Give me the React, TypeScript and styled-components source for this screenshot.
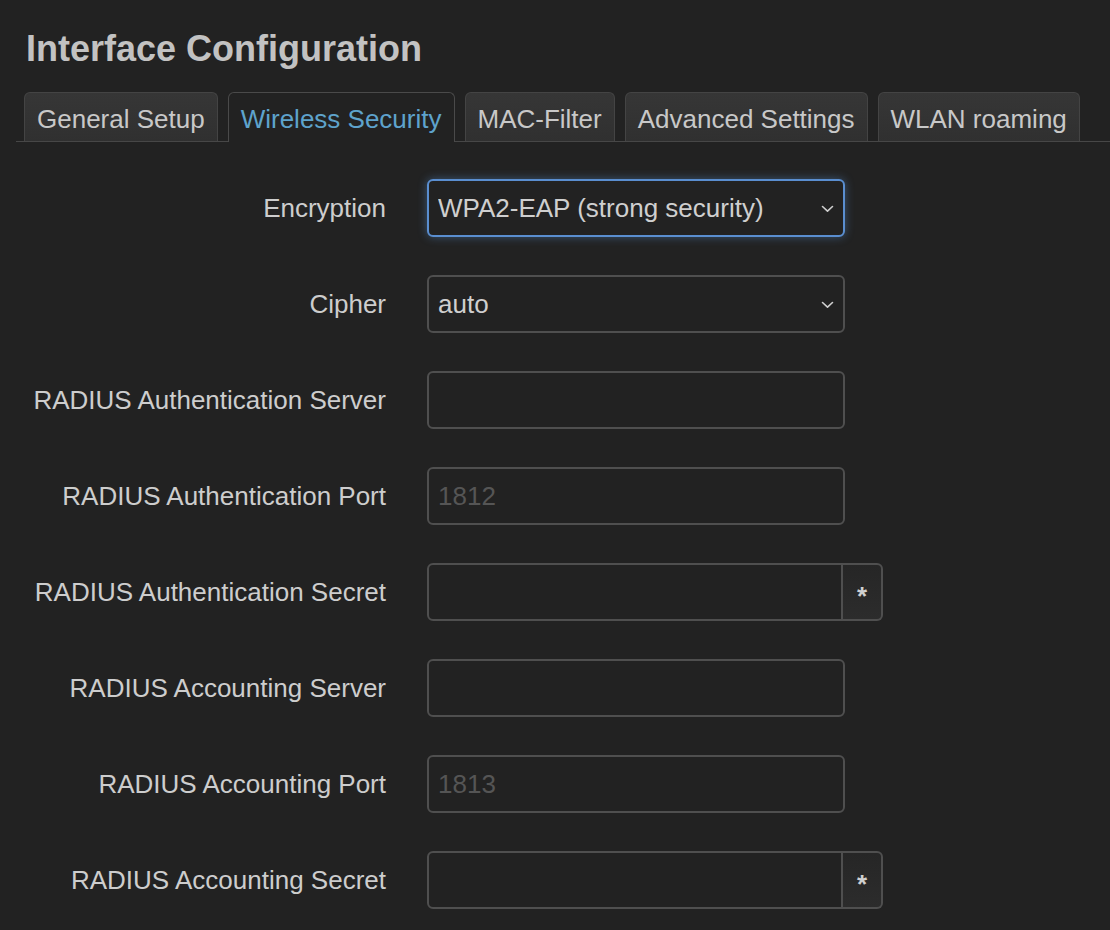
import React from "react";
import styled, { createGlobalStyle, css } from "styled-components";

const Global = createGlobalStyle`
  html, body { margin: 0; padding: 0; background: #222222; }
  body { font-family: "Liberation Sans", Arial, Helvetica, sans-serif; color: #cccccc; }
  * { box-sizing: border-box; }
`;

const Page = styled.div`
  padding: 27px 0 0 16px;
  min-height: 930px;
  background: #222222;
`;

const Title = styled.h2`
  margin: 0;
  padding-left: 10px;
  font-size: 36px;
  line-height: 44px;
  font-weight: bold;
  color: #c2c2c2;
`;

const TabBar = styled.ul`
  display: flex;
  gap: 10px;
  list-style: none;
  margin: 21px 0 0 0;
  padding: 0 0 0 8px;
  border-bottom: 1px solid #474747;
`;

const Tab = styled.li<{ $active?: boolean }>`
  font-size: 26px;
  line-height: 36px;
  padding: 8px 12px 4px;
  border: 1px solid #444;
  border-bottom: none;
  border-radius: 6px 6px 0 0;
  white-space: nowrap;
  color: #c8c8c8;
  background: linear-gradient(#363636, #303030);
  ${(p) =>
    p.$active &&
    css`
      color: #5ea3cc;
      background: #222222;
      margin-bottom: -1px;
      padding-bottom: 5px;
      border-color: #4a4a4a;
    `}
`;

const Form = styled.div`
  display: flex;
  flex-direction: column;
  gap: 38px;
  padding-top: 37px;
`;

const Row = styled.div`
  display: grid;
  grid-template-columns: 370px auto;
  column-gap: 41px;
  align-items: center;
`;

const Label = styled.label`
  text-align: right;
  font-size: 26px;
  color: #cdcdcd;
  white-space: nowrap;
`;

const fieldBase = css`
  height: 58px;
  font-family: "Liberation Sans", Arial, Helvetica, sans-serif;
  font-size: 26px;
  color: #cfcfcf;
  background: #222222;
  border: 2px solid #4f4f4f;
  border-radius: 6px;
  padding: 0 9px;
  outline: none;
  &::placeholder { color: #555555; }
`;

const TextInput = styled.input`
  ${fieldBase}
  width: 418px;
`;

const SelectWrap = styled.div`
  position: relative;
  width: 418px;
`;

const Select = styled.select<{ $focus?: boolean }>`
  ${fieldBase}
  width: 100%;
  appearance: none;
  -webkit-appearance: none;
  ${(p) =>
    p.$focus &&
    css`
      border-color: #5a8ed0;
      box-shadow: 0 0 10px rgba(90, 150, 220, 0.45);
    `}
`;

const Chevron = styled.svg`
  position: absolute;
  right: 11px;
  top: 50%;
  width: 13px;
  height: 8px;
  margin-top: -3px;
  pointer-events: none;
`;

const Group = styled.div`
  display: flex;
  width: 456px;
  height: 58px;
`;

const GroupInput = styled.input`
  ${fieldBase}
  flex: 1;
  min-width: 0;
  border-radius: 6px 0 0 6px;
`;

const RevealButton = styled.button`
  width: 40px;
  height: 58px;
  border: 2px solid #4f4f4f;
  border-left: none;
  border-radius: 0 6px 6px 0;
  background: linear-gradient(#262626, #2c2c2c);
  color: #d0d0d0;
  font-family: "Liberation Sans", Arial, sans-serif;
  font-weight: bold;
  font-size: 26px;
  padding: 8px 0 0;
  cursor: pointer;
`;

const tabs = ["General Setup", "Wireless Security", "MAC-Filter", "Advanced Settings", "WLAN roaming"];

function SelectField({ value, focus }: { value: string; focus?: boolean }) {
  return (
    <SelectWrap>
      <Select $focus={focus} defaultValue={value}>
        <option>{value}</option>
      </Select>
      <Chevron viewBox="0 0 13 8">
        <path d="M1.5 1.5 L6.5 6.2 L11.5 1.5" fill="none" stroke="#cfcfcf" strokeWidth="1.6" strokeLinecap="round" strokeLinejoin="round" />
      </Chevron>
    </SelectWrap>
  );
}

function SecretField() {
  return (
    <Group>
      <GroupInput type="password" />
      <RevealButton>*</RevealButton>
    </Group>
  );
}

export default function App() {
  return (
    <>
      <Global />
      <Page>
        <Title>Interface Configuration</Title>
        <TabBar>
          {tabs.map((t) => (
            <Tab key={t} $active={t === "Wireless Security"}>
              {t}
            </Tab>
          ))}
        </TabBar>
        <Form>
          <Row>
            <Label>Encryption</Label>
            <SelectField value="WPA2-EAP (strong security)" focus />
          </Row>
          <Row>
            <Label>Cipher</Label>
            <SelectField value="auto" />
          </Row>
          <Row>
            <Label>RADIUS Authentication Server</Label>
            <TextInput />
          </Row>
          <Row>
            <Label>RADIUS Authentication Port</Label>
            <TextInput placeholder="1812" />
          </Row>
          <Row>
            <Label>RADIUS Authentication Secret</Label>
            <SecretField />
          </Row>
          <Row>
            <Label>RADIUS Accounting Server</Label>
            <TextInput />
          </Row>
          <Row>
            <Label>RADIUS Accounting Port</Label>
            <TextInput placeholder="1813" />
          </Row>
          <Row>
            <Label>RADIUS Accounting Secret</Label>
            <SecretField />
          </Row>
        </Form>
      </Page>
    </>
  );
}
